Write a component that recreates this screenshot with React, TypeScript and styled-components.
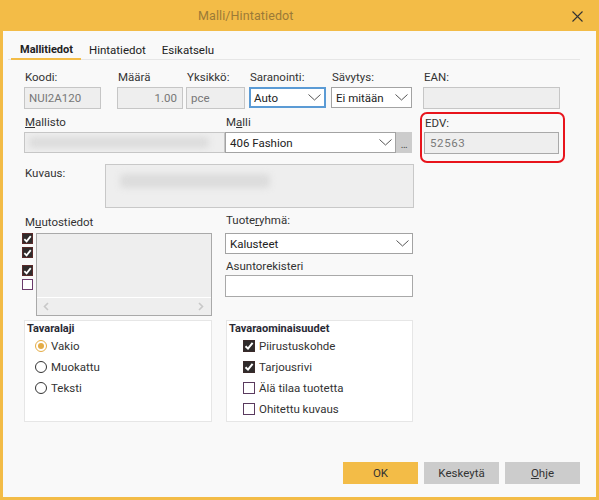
import * as React from 'react';
import styled, { createGlobalStyle } from 'styled-components';

const YELLOW = '#f3bc47';

const GlobalStyle = createGlobalStyle`
  body {
    margin: 0;
    font-family: Roboto, 'Noto Sans', sans-serif;
    font-size: 11.5px;
    color: #333;
  }
`;

function Chevron() {
  return (
    <svg width="13" height="7" viewBox="0 0 13 7">
      <path d="M0.5 0.5 L6.5 6 L12.5 0.5" fill="none" stroke="#555" strokeWidth="1" />
    </svg>
  );
}

function Check() {
  return (
    <svg width="10" height="10" viewBox="0 0 10 10">
      <path d="M1.5 5.2 L4 7.6 L8.6 1.8" fill="none" stroke="#fff" strokeWidth="2" />
    </svg>
  );
}

function Arrow({ dir }: { dir: 'left' | 'right' }) {
  const d = dir === 'left' ? 'M5 1 L1.5 4.5 L5 8' : 'M1 1 L4.5 4.5 L1 8';
  return (
    <svg width="6" height="9" viewBox="0 0 6 9">
      <path d={d} fill="none" stroke="#c8c8c8" strokeWidth="1.6" />
    </svg>
  );
}

function App() {
  return (
    <>
      <GlobalStyle />
      <Dialog>
        <TitleBar>
          <Title>Malli/Hintatiedot</Title>
          <Close>
            <svg width="11" height="11" viewBox="0 0 11 11">
              <path d="M0.5 0.5 L10.5 10.5 M10.5 0.5 L0.5 10.5" stroke="#333" strokeWidth="1.1" />
            </svg>
          </Close>
        </TitleBar>

        <Tabs>
          <Tab $active>Mallitiedot</Tab>
          <Tab>Hintatiedot</Tab>
          <Tab>Esikatselu</Tab>
        </Tabs>

        <Form>
          <Row>
            <Field $w={77}>
              <Label>Koodi:</Label>
              <TextBox>NUI2A120</TextBox>
            </Field>
            <Field $w={66} $ml={16}>
              <Label>Määrä</Label>
              <TextBox $right>1.00</TextBox>
            </Field>
            <Field $w={59} $ml={3}>
              <Label>Yksikkö:</Label>
              <TextBox>pce</TextBox>
            </Field>
            <Field $w={77} $ml={4}>
              <Label>Saranointi:</Label>
              <Select $focus>
                <span>Auto</span>
                <Chevron />
              </Select>
            </Field>
            <Field $w={81} $ml={5}>
              <Label>Sävytys:</Label>
              <Select>
                <span>Ei mitään</span>
                <Chevron />
              </Select>
            </Field>
            <Field $w={137} $ml={11}>
              <Label>EAN:</Label>
              <TextBox />
            </Field>
          </Row>

          <ModelRow>
            <Field $w={201} $mt={2}>
              <Label>
                <u>M</u>allisto
              </Label>
              <TextBox $h={21}>
                <Blur $w={180} />
              </TextBox>
            </Field>
            <Field $w={187} $mt={2}>
              <Label>
                M<u>a</u>lli
              </Label>
              <Combo>
                <Select $grow>
                  <span>406 Fashion</span>
                  <Chevron />
                </Select>
                <DotsButton>...</DotsButton>
              </Combo>
            </Field>
            <EdvBox>
              <Label>EDV:</Label>
              <EdvInput>52563</EdvInput>
            </EdvBox>
          </ModelRow>

          <DescRow>
            <DescLabel>Kuvaus:</DescLabel>
            <DescArea>
              <Blur $w={150} $h={14} />
            </DescArea>
          </DescRow>

          <MiddleRow>
            <ChangesColumn>
              <ChangesLabel>
                M<u>u</u>utostiedot
              </ChangesLabel>
              <ChangesBody>
                <CheckColumn>
                  <SmallCheck $checked $mt={0}>
                    <Check />
                  </SmallCheck>
                  <SmallCheck $checked $mt={3}>
                    <Check />
                  </SmallCheck>
                  <SmallCheck $checked $mt={7}>
                    <Check />
                  </SmallCheck>
                  <SmallCheck $mt={3} />
                </CheckColumn>
                <ListBox>
                  <ListArea />
                  <HScroll>
                    <Arrow dir="left" />
                    <Arrow dir="right" />
                  </HScroll>
                </ListBox>
              </ChangesBody>
            </ChangesColumn>

            <GroupColumn>
              <Label>
                Tuote<u>r</u>yhmä:
              </Label>
              <Select $mt={3}>
                <span>Kalusteet</span>
                <Chevron />
              </Select>
              <Label $mt={4}>Asuntorekisteri</Label>
              <WhiteBox />
            </GroupColumn>
          </MiddleRow>

          <GroupsRow>
            <GroupBox $w={188}>
              <GroupTitle>Tavaralaji</GroupTitle>
              <OptionRow $indent={8}>
                <Radio $checked />
                <span>Vakio</span>
              </OptionRow>
              <OptionRow $indent={8}>
                <Radio />
                <span>Muokattu</span>
              </OptionRow>
              <OptionRow $indent={8}>
                <Radio />
                <span>Teksti</span>
              </OptionRow>
            </GroupBox>
            <GroupBox $w={187} $ml={14}>
              <GroupTitle>Tavaraominaisuudet</GroupTitle>
              <OptionRow $indent={14}>
                <BoxCheck $checked>
                  <Check />
                </BoxCheck>
                <span>Piirustuskohde</span>
              </OptionRow>
              <OptionRow $indent={14}>
                <BoxCheck $checked>
                  <Check />
                </BoxCheck>
                <span>Tarjousrivi</span>
              </OptionRow>
              <OptionRow $indent={14}>
                <BoxCheck />
                <span>Älä tilaa tuotetta</span>
              </OptionRow>
              <OptionRow $indent={14}>
                <BoxCheck />
                <span>Ohitettu kuvaus</span>
              </OptionRow>
            </GroupBox>
          </GroupsRow>
        </Form>

        <Footer>
          <Button $primary>OK</Button>
          <Button>Keskeytä</Button>
          <Button>
            <u>O</u>hje
          </Button>
        </Footer>
      </Dialog>
    </>
  );
}

const Dialog = styled.div`
  width: 599px;
  height: 500px;
  box-sizing: border-box;
  border: 3px solid ${YELLOW};
  border-top: 0;
  background: #f9f9f9;
  display: flex;
  flex-direction: column;
`;

const TitleBar = styled.div`
  height: 31px;
  flex: none;
  background: ${YELLOW};
  display: flex;
  align-items: center;
`;

const Title = styled.div`
  padding-left: 195px;
  font-size: 12.5px;
  color: #9b7a37;
  letter-spacing: 0.1px;
`;

const Close = styled.div`
  margin-left: auto;
  margin-right: 13px;
  display: flex;
  padding-top: 1px;
`;

const Tabs = styled.div`
  display: flex;
  margin: 0 16px 0 5px;
  padding-left: 3px;
  border-bottom: 1px solid #e6e6e6;
`;

const Tab = styled.div<{ $active?: boolean }>`
  padding: 11px 8px 0 ${(p) => (p.$active ? 9 : 8)}px;
  line-height: 16px;
  margin-bottom: -1px;
  border-bottom: 2px solid ${(p) => (p.$active ? YELLOW : 'transparent')};
  font-weight: ${(p) => (p.$active ? 700 : 400)};
  font-size: ${(p) => (p.$active ? 11 : 11.5)}px;
  color: #222;
`;

const Form = styled.div`
  padding: 9px 0 0 21px;
  display: flex;
  flex-direction: column;
`;

const Row = styled.div`
  display: flex;
`;

const Field = styled.div<{ $w: number; $ml?: number; $mt?: number }>`
  width: ${(p) => p.$w}px;
  margin-left: ${(p) => p.$ml ?? 0}px;
  margin-top: ${(p) => p.$mt ?? 0}px;
  display: flex;
  flex-direction: column;
`;

const Label = styled.div<{ $mt?: number }>`
  height: 16px;
  line-height: 16px;
  padding-left: 1px;
  margin: ${(p) => p.$mt ?? 0}px 0 2px;
  white-space: nowrap;
  color: #333;
`;

const TextBox = styled.div<{ $right?: boolean; $h?: number }>`
  height: ${(p) => p.$h ?? 22}px;
  box-sizing: border-box;
  border: 1px solid #c6c6c6;
  background: #eeeeee;
  color: #777;
  padding: 0 ${(p) => (p.$right ? 5 : 4)}px 0 4px;
  display: flex;
  align-items: center;
  justify-content: ${(p) => (p.$right ? 'flex-end' : 'flex-start')};
  overflow: hidden;
`;

const Blur = styled.div<{ $w: number; $h?: number }>`
  width: ${(p) => p.$w}px;
  height: ${(p) => p.$h ?? 11}px;
  background: #dcdcdc;
  border-radius: 4px;
  filter: blur(3px);
`;

const Select = styled.div<{ $focus?: boolean; $grow?: boolean; $mt?: number }>`
  height: 21px;
  box-sizing: border-box;
  margin-top: ${(p) => p.$mt ?? 0}px;
  border: ${(p) => (p.$focus ? '2px solid #5b9bd5' : '1px solid #a3a3a3')};
  background: #fff;
  color: #222;
  padding: 0 3px 0 ${(p) => (p.$focus ? 3 : 4)}px;
  display: flex;
  align-items: center;
  justify-content: space-between;
  flex: ${(p) => (p.$grow ? 1 : 'none')};
`;

const Combo = styled.div`
  display: flex;
`;

const DotsButton = styled.div`
  width: 16px;
  height: 21px;
  background: #cccccc;
  color: #444;
  display: flex;
  justify-content: center;
  align-items: flex-end;
  line-height: 16px;
  font-size: 10px;
  letter-spacing: -0.5px;
`;

const ModelRow = styled.div`
  display: flex;
  align-items: flex-start;
  margin-top: 3px;
`;

const EdvBox = styled.div`
  width: 145px;
  height: 51px;
  box-sizing: border-box;
  margin-left: 8px;
  border: 2px solid #e8141c;
  border-radius: 7px;
  padding: 1px 4px 0 2px;
  display: flex;
  flex-direction: column;
`;

const EdvInput = styled.div`
  height: 22px;
  box-sizing: border-box;
  margin-top: -1px;
  border: 1px solid #a9a9a9;
  background: #eeeeee;
  color: #7a7a7a;
  padding-left: 5px;
  letter-spacing: 0.6px;
  display: flex;
  align-items: center;
`;

const DescRow = styled.div`
  display: flex;
  align-items: flex-start;
  margin-top: 1px;
`;

const DescLabel = styled.div`
  width: 80px;
  line-height: 16px;
  padding: 1px 0 0 1px;
`;

const DescArea = styled.div`
  width: 309px;
  height: 44px;
  box-sizing: border-box;
  border: 1px solid #c8c8c8;
  background: #eeeeee;
  padding: 9px 0 0 14px;
  overflow: hidden;
`;

const MiddleRow = styled.div`
  display: flex;
  align-items: flex-start;
  margin-top: 4px;
`;

const ChangesColumn = styled.div`
  width: 190px;
  margin-left: -2px;
  display: flex;
  flex-direction: column;
`;

const ChangesLabel = styled.div`
  line-height: 16px;
  padding: 2px 0 0 3px;
`;

const ChangesBody = styled.div`
  display: flex;
  margin-top: 3px;
`;

const CheckColumn = styled.div`
  width: 14px;
  display: flex;
  flex-direction: column;
`;

const SmallCheck = styled.div<{ $checked?: boolean; $mt: number }>`
  width: 11px;
  height: 11px;
  box-sizing: border-box;
  margin-top: ${(p) => p.$mt}px;
  background: ${(p) => (p.$checked ? '#2f2b2b' : '#fff')};
  border: 1px solid ${(p) => (p.$checked ? '#5a2a2a' : '#6b3a6b')};
  display: flex;
  align-items: center;
  justify-content: center;
`;

const ListBox = styled.div`
  width: 176px;
  height: 83px;
  box-sizing: border-box;
  border: 1px solid #a9a9a9;
  background: #eeeeee;
  display: flex;
  flex-direction: column;
`;

const ListArea = styled.div`
  flex: 1;
`;

const HScroll = styled.div`
  height: 17px;
  border-top: 1px solid #fff;
  display: flex;
  align-items: center;
  justify-content: space-between;
  padding: 0 7px 0 6px;
`;

const GroupColumn = styled.div`
  width: 188px;
  margin-left: 13px;
  display: flex;
  flex-direction: column;
`;

const WhiteBox = styled.div`
  height: 22px;
  box-sizing: border-box;
  margin-top: -1px;
  border: 1px solid #a9a9a9;
  background: #fff;
`;

const GroupsRow = styled.div`
  display: flex;
  margin-top: 4px;
`;

const GroupBox = styled.div<{ $w: number; $ml?: number }>`
  width: ${(p) => p.$w}px;
  height: 102px;
  box-sizing: border-box;
  margin-left: ${(p) => p.$ml ?? 0}px;
  border: 1px solid #e6e6e6;
  background: #fff;
  padding: 1px 0 0 2px;
  display: flex;
  flex-direction: column;
`;

const GroupTitle = styled.div`
  font-weight: 700;
  font-size: 11px;
  line-height: 13px;
  color: #2a2a35;
`;

const OptionRow = styled.div<{ $indent: number }>`
  height: 21px;
  display: flex;
  align-items: center;
  gap: 4px;
  padding-left: ${(p) => p.$indent}px;
  color: #333;
`;

const Radio = styled.div<{ $checked?: boolean }>`
  width: 12px;
  height: 12px;
  box-sizing: border-box;
  border-radius: 50%;
  border: 1.4px solid ${(p) => (p.$checked ? '#e4ac45' : '#333')};
  display: flex;
  align-items: center;
  justify-content: center;

  &::after {
    content: '';
    width: 6px;
    height: 6px;
    border-radius: 50%;
    background: ${(p) => (p.$checked ? '#e4ac45' : 'transparent')};
  }
`;

const BoxCheck = styled.div<{ $checked?: boolean }>`
  width: 12px;
  height: 12px;
  box-sizing: border-box;
  background: ${(p) => (p.$checked ? '#2f2b2b' : '#fff')};
  border: 1px solid ${(p) => (p.$checked ? '#3a2a2a' : '#5a3a5e')};
  display: flex;
  align-items: center;
  justify-content: center;
`;

const Footer = styled.div`
  margin-top: auto;
  display: flex;
  justify-content: flex-end;
  gap: 6px;
  padding: 0 16px 13px 0;
`;

const Button = styled.div<{ $primary?: boolean }>`
  width: 75px;
  height: 22px;
  display: flex;
  align-items: center;
  justify-content: center;
  background: ${(p) => (p.$primary ? YELLOW : '#cccccc')};
  color: #333;
`;

export default App;
